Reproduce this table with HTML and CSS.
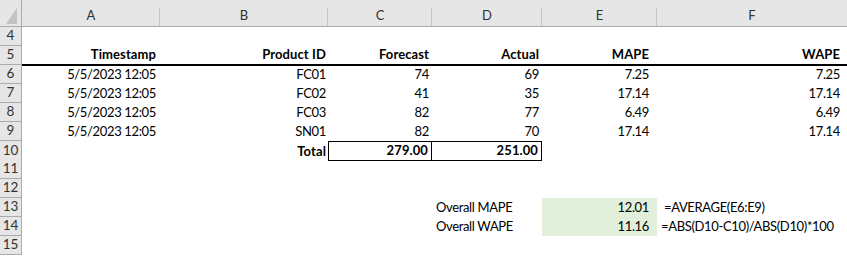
FILE: index.html
```html
<!DOCTYPE html>
<html lang="en">
<head>
  <meta charset="UTF-8">
  <title>Forecast Error - MAPE vs WAPE</title>
  <link rel="stylesheet" href="styles.css">
</head>
<body>

  <div class="sheet">
    <!-- Cabeçalho das colunas -->
    <div class="row col-head">
      <div class="corner"><span class="tri"></span></div>
      <div class="letter sep">A</div>
      <div class="letter sep">B</div>
      <div class="letter sep">C</div>
      <div class="letter sep">D</div>
      <div class="letter sep">E</div>
      <div class="letter">F</div>
    </div>

    <div class="row">
      <div class="num">4</div>
      <div class="cell"></div><div class="cell"></div><div class="cell"></div>
      <div class="cell"></div><div class="cell"></div><div class="cell"></div>
    </div>

    <div class="row titles">
      <div class="num">5</div>
      <div class="cell r a">Timestamp</div>
      <div class="cell r b">Product ID</div>
      <div class="cell r c">Forecast</div>
      <div class="cell r d">Actual</div>
      <div class="cell r e">MAPE</div>
      <div class="cell r f">WAPE</div>
    </div>

    <div class="row first">
      <div class="num">6</div>
      <div class="cell r a">5/5/2023 12:05</div>
      <div class="cell r b">FC01</div>
      <div class="cell r c">74</div>
      <div class="cell r d">69</div>
      <div class="cell r e">7.25</div>
      <div class="cell r f">7.25</div>
    </div>

    <div class="row">
      <div class="num">7</div>
      <div class="cell r a">5/5/2023 12:05</div>
      <div class="cell r b">FC02</div>
      <div class="cell r c">41</div>
      <div class="cell r d">35</div>
      <div class="cell r e">17.14</div>
      <div class="cell r f">17.14</div>
    </div>

    <div class="row">
      <div class="num">8</div>
      <div class="cell r a">5/5/2023 12:05</div>
      <div class="cell r b">FC03</div>
      <div class="cell r c">82</div>
      <div class="cell r d">77</div>
      <div class="cell r e">6.49</div>
      <div class="cell r f">6.49</div>
    </div>

    <div class="row">
      <div class="num">9</div>
      <div class="cell r a">5/5/2023 12:05</div>
      <div class="cell r b">SN01</div>
      <div class="cell r c">82</div>
      <div class="cell r d">70</div>
      <div class="cell r e">17.14</div>
      <div class="cell r f">17.14</div>
    </div>

    <div class="row total">
      <div class="num">10</div>
      <div class="cell"></div>
      <div class="cell r b">Total</div>
      <div class="cell r c boxed">279.00</div>
      <div class="cell r d boxed right">251.00</div>
      <div class="cell"></div>
      <div class="cell"></div>
    </div>

    <div class="row">
      <div class="num">11</div>
      <div class="cell"></div><div class="cell"></div><div class="cell"></div>
      <div class="cell"></div><div class="cell"></div><div class="cell"></div>
    </div>

    <div class="row">
      <div class="num">12</div>
      <div class="cell"></div><div class="cell"></div><div class="cell"></div>
      <div class="cell"></div><div class="cell"></div><div class="cell"></div>
    </div>

    <div class="row">
      <div class="num">13</div>
      <div class="cell"></div>
      <div class="cell"></div>
      <div class="cell"></div>
      <div class="cell l label">Overall MAPE</div>
      <div class="cell r e green">12.01</div>
      <div class="cell l formula"> =AVERAGE(E6:E9)</div>
    </div>

    <div class="row">
      <div class="num">14</div>
      <div class="cell"></div>
      <div class="cell"></div>
      <div class="cell"></div>
      <div class="cell l label">Overall WAPE</div>
      <div class="cell r e green">11.16</div>
      <div class="cell l formula">=ABS(D10-C10)/ABS(D10)*100</div>
    </div>

    <div class="row">
      <div class="num">15</div>
      <div class="cell"></div><div class="cell"></div><div class="cell"></div>
      <div class="cell"></div><div class="cell"></div><div class="cell"></div>
    </div>
  </div>

</body>
</html>
```

FILE: styles.css
```css
* {
  margin: 0;
  padding: 0;
  box-sizing: border-box;
}

body {
  font-family: 'Lato', 'Liberation Sans', sans-serif;
  font-size: 13px;
  letter-spacing: -0.35px;
  color: #000;
  background: #fff;
  width: 847px;
  height: 256px;
  overflow: hidden;
}

.sheet {
  width: 847px;
}

.row {
  display: grid;
  grid-template-columns: 22px 138px 168px 104px 110px 115px 190px;
  height: 19px;
}

/* Cabeçalho das colunas */
.col-head {
  height: 27px;
  background-color: #e6e6e6;
  border-bottom: 1px solid #ababab;
}

.corner {
  position: relative;
  border-right: 1px solid #ababab;
}

.corner .tri {
  position: absolute;
  right: 4px;
  bottom: 2px;
  width: 0;
  height: 0;
  border-left: 11px solid transparent;
  border-bottom: 16px solid #c3c3c3;
}

.letter {
  display: flex;
  align-items: flex-end;
  justify-content: center;
  padding-bottom: 3px;
  color: #333;
  position: relative;
  letter-spacing: 0;
}

.letter.sep::after {
  content: '';
  position: absolute;
  right: 0;
  top: 8px;
  bottom: 0;
  width: 1px;
  background-color: #c6c6c6;
}

/* Números das linhas */
.num {
  background-color: #e6e6e6;
  border-right: 1px solid #ababab;
  border-bottom: 1px solid #ababab;
  display: flex;
  align-items: flex-end;
  justify-content: center;
  padding-bottom: 1px;
  color: #333;
  font-size: 13.5px;
  letter-spacing: 0;
  line-height: 17px;
}

.cell {
  display: flex;
  align-items: flex-end;
  line-height: 17px;
  padding-bottom: 1px;
  white-space: pre;
}

.r {
  justify-content: flex-end;
}

.l {
  justify-content: flex-start;
}

.a { padding-right: 4px; }
.b { padding-right: 2px; }
.c { padding-right: 3px; }
.d { padding-right: 3px; }
.e { padding-right: 8px; }
.f { padding-right: 7px; }

.titles .cell,
.total .cell {
  font-weight: bold;
  letter-spacing: 0.1px;
}

.titles .cell {
  border-bottom: 1px solid #000;
}

.first .cell {
  border-top: 1px solid #000;
}

.boxed {
  border: 1px solid #000;
}

.boxed.right {
  border-left: none;
}

.label {
  padding-left: 4px;
}

.formula {
  padding-left: 4px;
}

.green {
  background-color: #e2efda;
}
```
